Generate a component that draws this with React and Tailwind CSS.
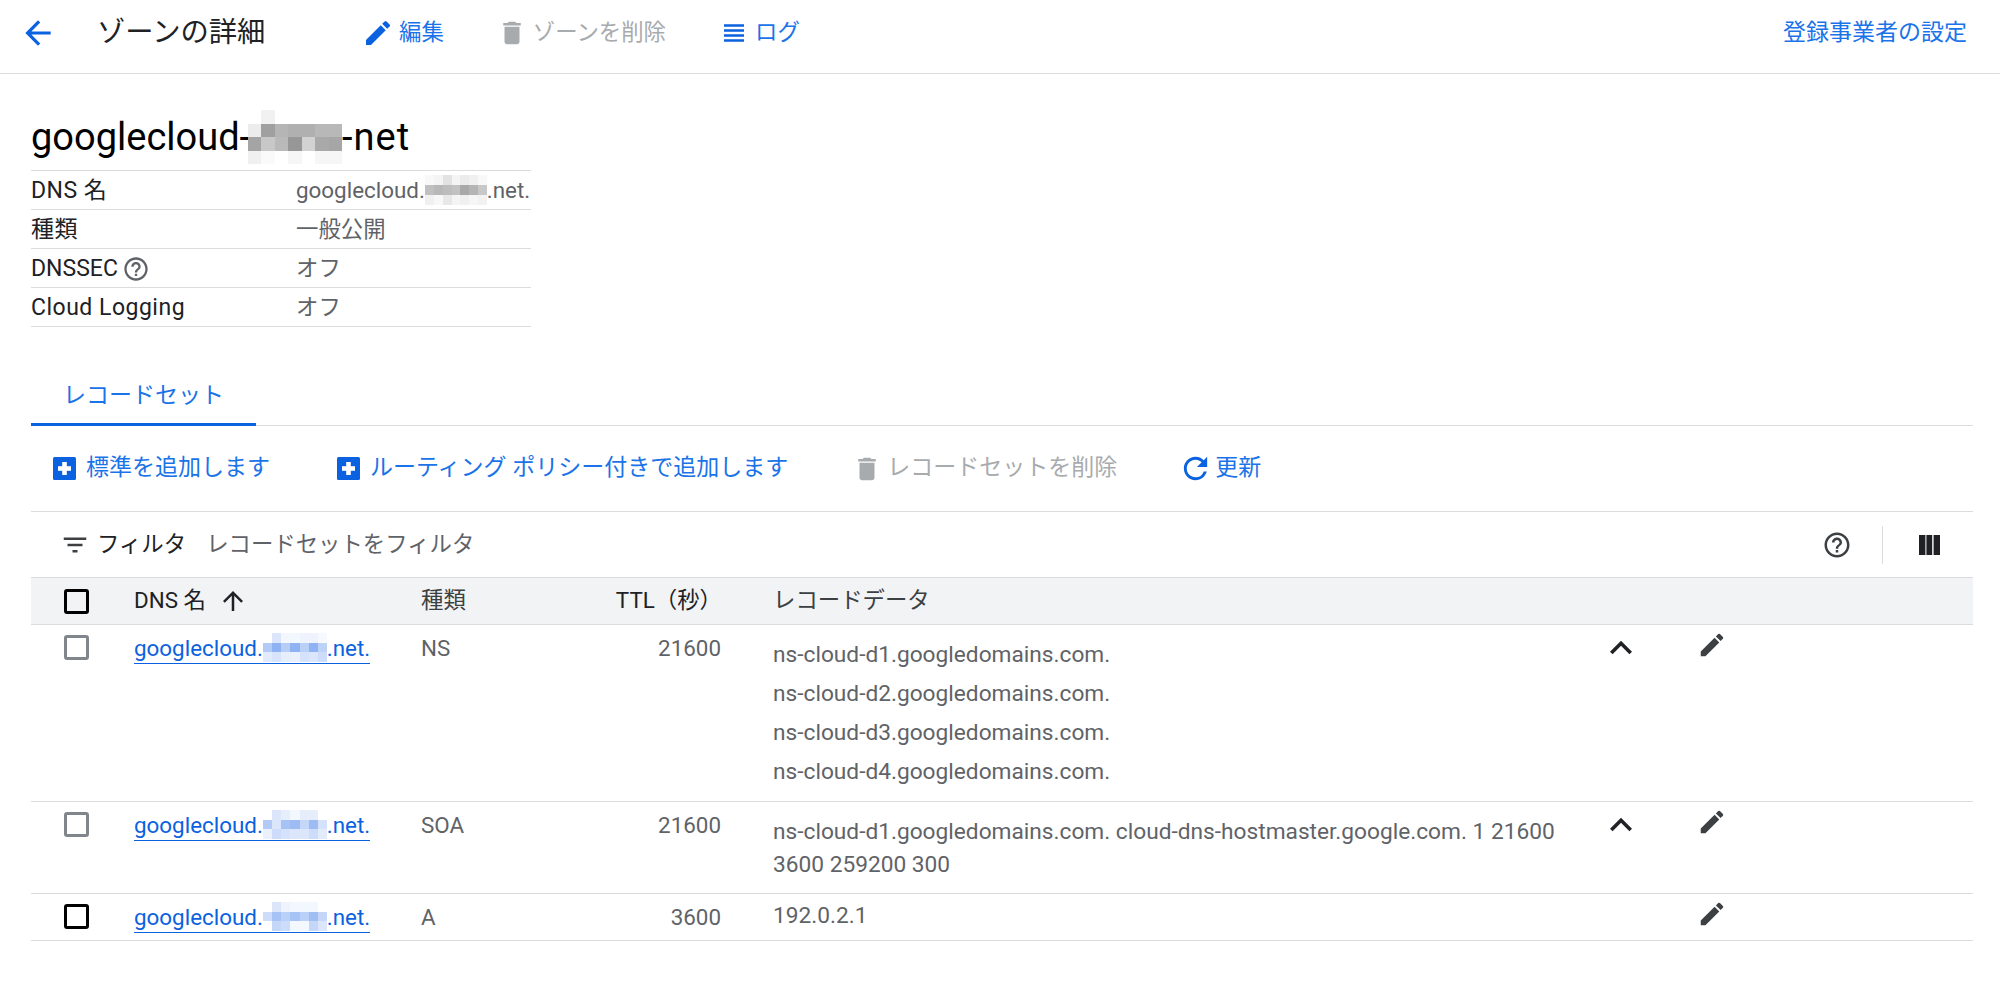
import {
  MdArrowBack,
  MdEdit,
  MdDelete,
  MdViewHeadline,
  MdRefresh,
  MdFilterList,
  MdHelpOutline,
  MdArrowUpward,
  MdKeyboardArrowUp,
} from 'react-icons/md'

const ROW_GRID = 'grid grid-cols-[104px_286px_100px_200px_845px_110px_70px_1fr]'

// pixelated patches that hide the domain name in the screenshot
function Mosaic({ cells, w, h, className }) {
  const rows = cells.length
  const cols = cells[0].length
  return (
    <svg
      width={w}
      height={h}
      viewBox={`0 0 ${cols} ${rows}`}
      preserveAspectRatio="none"
      shapeRendering="crispEdges"
      className={className}
    >
      {cells.map((row, y) =>
        row.map((fill, x) => (fill ? <rect key={`${x}-${y}`} x={x} y={y} width="1" height="1" fill={fill} /> : null))
      )}
    </svg>
  )
}

function AddBox() {
  return (
    <svg width="23" height="23" viewBox="0 0 23 23">
      <rect width="23" height="23" rx="1.5" fill="#0b62e0" />
      <rect x="5" y="9.2" width="13" height="4.6" fill="#fff" />
      <rect x="9.2" y="5" width="4.6" height="13" fill="#fff" />
    </svg>
  )
}

const titleCells = [
  [null, '#f1f1f1', null, null, null, null, null],
  ['#ececec', '#a0a0a0', '#b5b5b5', '#b0b0b0', '#b0b0b0', '#b8b8b8', '#b8b8b8'],
  ['#a4a4a4', '#c8c8c8', '#b9b9b9', '#979797', '#d2d2d2', '#a9a9a9', '#a6a6a6'],
  ['#f0f0f0', '#fafafa', null, '#f6f6f6', null, '#f6f6f6', '#f6f6f6'],
]

const valueCells = [
  ['#f8f8f8', '#f4f4f4', '#e2e2e2', '#f4f4f4', '#ebebeb', '#f0f0f0', '#f8f8f8'],
  ['#c0c0c0', '#b8b8b8', '#bdbdbd', '#c2c2c2', '#a9a9a9', '#b5b5b5', '#c8c8c8'],
  ['#f0f0f0', '#f8f8f8', '#e8e8e8', '#f4f4f4', '#f0f0f0', '#f6f6f6', '#f2f2f2'],
]

const linkCellsA = [
  [null, '#dbe6fb', '#f3f7fe', '#f3f7fe', '#eef3fd', '#eef3fd', '#f6f9fe'],
  ['#b2cbf6', '#8fb2f2', '#b6cef6', '#8fb2f2', '#b9d0f7', '#8fb2f2', '#bcd2f7'],
  ['#e2ebfc', '#d8e4fb', '#e6eefc', '#eaf1fd', '#d5e2fb', '#dbe6fb', '#cddcfa'],
]
const linkCellsB = [
  [null, '#dbe6fb', '#e6eefc', '#f3f7fe', '#e6eefc', '#e6eefc', null],
  ['#b2cbf6', '#dbe6fb', '#a7c3f5', '#9dbcf3', '#c4d7f8', '#9dbcf3', '#d5e2fb'],
  ['#eaf1fd', '#cddcfa', '#d5e2fb', '#dbe6fb', '#dbe6fb', '#cddcfa', '#e2ebfc'],
]
const linkCellsC = [
  [null, '#dbe6fb', '#eef3fd', '#f3f7fe', '#f3f7fe', '#f3f7fe', null],
  ['#cddcfa', '#a7c3f5', '#b9d0f7', '#a7c3f5', '#b9d0f7', '#a0bef4', '#c4d7f8'],
  [null, '#c4d7f8', '#cddcfa', '#f3f7fe', '#f3f7fe', '#c4d7f8', '#dbe6fb'],
]

const records = [
  {
    type: 'NS',
    ttl: '21600',
    mosaic: linkCellsA,
    data: ['ns-cloud-d1.googledomains.com.', 'ns-cloud-d2.googledomains.com.', 'ns-cloud-d3.googledomains.com.', 'ns-cloud-d4.googledomains.com.'],
    dataClass: 'pt-[10px] pb-[10px] leading-[39px]',
    expandable: true,
    check: 'border-[#80868b]',
  },
  {
    type: 'SOA',
    ttl: '21600',
    mosaic: linkCellsB,
    data: ['ns-cloud-d1.googledomains.com. cloud-dns-hostmaster.google.com. 1 21600 3600 259200 300'],
    dataClass: 'pt-[13px] pb-[12px] leading-[33px]',
    expandable: true,
    check: 'border-[#80868b]',
  },
  {
    type: 'A',
    ttl: '3600',
    mosaic: linkCellsC,
    data: ['192.0.2.1'],
    dataClass: 'pt-[6px] pb-[8px] leading-[32px]',
    expandable: false,
    check: 'border-black',
  },
]

function ToolButton({ icon, label, disabled, iconClass = 'text-[27px]', gap = 'gap-[7px]', className = '' }) {
  return (
    <button className={`flex items-center ${gap} ${className} ${disabled ? 'text-[#a8abae]' : 'text-[#1a73e8]'}`}>
      <span className={`flex items-center ${iconClass} ${disabled ? 'text-[#a8abae]' : 'text-[#0b62e0]'}`}>{icon}</span>
      <span>{label}</span>
    </button>
  )
}

function InfoRow({ label, children }) {
  return (
    <div className="grid grid-cols-[265px_1fr] h-[39px] pt-[1px] items-center border-b border-[#dadce0]">
      <div className="flex items-center gap-[4px] pt-[1px] text-[23px] tracking-[0.5px] text-[#202124]">{label}</div>
      <div className="text-[#5f6368] whitespace-nowrap">{children}</div>
    </div>
  )
}

export default function App() {
  return (
    <div className="w-[2000px] h-[983px] bg-white overflow-hidden text-[22.4px] font-['Roboto','Noto_Sans_CJK_JP',sans-serif]">
      {/* Top bar */}
      <header className="flex items-center h-[74px] border-b border-[#dadce0] pl-[19px] pr-[33px] pb-[7px]">
        <MdArrowBack className="text-[38px] text-[#0b62e0]" />
        <h1 className="ml-[40px] w-[265px] text-[28.3px] text-[#202124]">ゾーンの詳細</h1>
        <div className="flex items-center gap-[53px]">
          <ToolButton icon={<MdEdit />} label="編集" gap="gap-[5px]" iconClass="text-[32px]" />
          <ToolButton icon={<MdDelete />} label="ゾーンを削除" disabled gap="gap-[6px]" iconClass="text-[30px]" />
          <ToolButton icon={<MdViewHeadline />} label="ログ" gap="gap-[6px]" iconClass="text-[30px]" />
        </div>
        <a className="ml-auto text-[23px] text-[#1a73e8]">登録事業者の設定</a>
      </header>

      <main className="pl-[31px] pr-[27px]">
        <h2 className="pt-[41px] pb-[11px] text-[38px] leading-[44px] text-black flex items-center">
          googlecloud-
          <Mosaic cells={titleCells} w={94} h={54} className="-my-[5px] -ml-[2px]" />
          <span className="tracking-[1px]">-net</span>
        </h2>

        <div className="w-[500px] border-t border-[#dadce0]">
          <InfoRow label="DNS 名">
            <span className="inline-flex items-center">
              googlecloud.
              <Mosaic cells={valueCells} w={62} h={30} className="-my-[4px]" />
              .net.
            </span>
          </InfoRow>
          <InfoRow label="種類">一般公開</InfoRow>
          <InfoRow
            label={
              <>
                <span className="tracking-normal">DNSSEC</span>
                <MdHelpOutline className="text-[28px] text-[#5f6368]" />
              </>
            }
          >
            オフ
          </InfoRow>
          <InfoRow label="Cloud Logging">オフ</InfoRow>
        </div>

        {/* Tabs */}
        <div className="mt-[45px] border-b border-[#dadce0]">
          <div className="flex items-center justify-center w-[225px] h-[54px] pb-[3px] border-b-[3px] border-[#0b62e0] text-[23px] text-[#1a73e8] -mb-px">
            レコードセット
          </div>
        </div>

        {/* Record set actions */}
        <div className="flex items-center h-[86px] pl-[22px] text-[23px] border-b border-[#dadce0]">
          <ToolButton icon={<AddBox />} label="標準を追加します" gap="gap-[10px]" />
          <ToolButton icon={<AddBox />} label="ルーティング ポリシー付きで追加します" gap="gap-[10px]" className="ml-[67px]" />
          <ToolButton icon={<MdDelete />} label="レコードセットを削除" disabled iconClass="text-[30px]" gap="gap-[5px]" className="ml-[64px]" />
          <ToolButton icon={<MdRefresh />} label="更新" iconClass="text-[35px]" gap="gap-[2px]" className="ml-[61px]" />
        </div>

        {/* Filter */}
        <div className="flex items-center h-[65px] pl-[29px]">
          <MdFilterList className="text-[30px] text-[#3c4043]" />
          <span className="ml-[7px] text-[#202124]">フィルタ</span>
          <span className="ml-[20px] text-[#5f6368]">レコードセットをフィルタ</span>
          <MdHelpOutline className="ml-auto text-[30px] text-[#3c4043]" />
          <div className="ml-[30px] h-[38px] border-l border-[#dadce0]" />
          <svg className="ml-[36px] mr-[33px]" width="21" height="20" viewBox="0 0 21 20" fill="#202124">
            <rect x="0" y="0" width="6.4" height="20" />
            <rect x="7.4" y="0" width="5.8" height="20" />
            <rect x="14.6" y="0" width="6.4" height="20" />
          </svg>
        </div>

        {/* Table */}
        <div className={`${ROW_GRID} h-[48px] items-center bg-[#f1f3f4] border-y border-[#dadce0] text-[#202124]`}>
          <div className="flex pl-[33px]">
            <div className="w-[25px] h-[25px] border-[3px] border-black rounded-[3px]" />
          </div>
          <div className="flex items-center -ml-[1px]">
            DNS 名
            <MdArrowUpward className="ml-[12px] text-[30px]" />
          </div>
          <div className="text-[#3c4043]">種類</div>
          <div className="text-right -mr-[1px] whitespace-nowrap">TTL（秒）</div>
          <div className="pl-[52px] text-[#3c4043]">レコードデータ</div>
        </div>

        {records.map((r) => (
          <div key={r.type} className={`${ROW_GRID} border-b border-[#dadce0] text-[#5f6368]`}>
            <div className="flex pl-[33px] pt-[10px]">
              <div className={`w-[25px] h-[25px] border-[3px] rounded-[3px] ${r.check}`} />
            </div>
            <div className="pt-[7px] leading-[32px] -ml-[1px]">
              <a className="inline-flex items-center h-[30px] border-b-[1.5px] border-[#0b62e0] text-[#0b62e0]">
                googlecloud.
                <Mosaic cells={r.mosaic} w={64} h={29} className="-mt-[2px]" />
                .net.
              </a>
            </div>
            <div className="pt-[7px] leading-[32px]">{r.type}</div>
            <div className="pt-[7px] leading-[32px] text-right">{r.ttl}</div>
            <div className={`pl-[52px] text-[22.7px] ${r.dataClass}`}>
              {r.data.map((line) => (
                <div key={line}>{line}</div>
              ))}
            </div>
            <div className="flex justify-center pt-[1px]">
              {r.expandable && <MdKeyboardArrowUp className="text-[44px] text-[#202124]" />}
            </div>
            <div className="flex justify-center pt-[5px] pl-[1px]">
              <MdEdit className="text-[30px] text-[#3c4043]" />
            </div>
          </div>
        ))}
      </main>
    </div>
  )
}
